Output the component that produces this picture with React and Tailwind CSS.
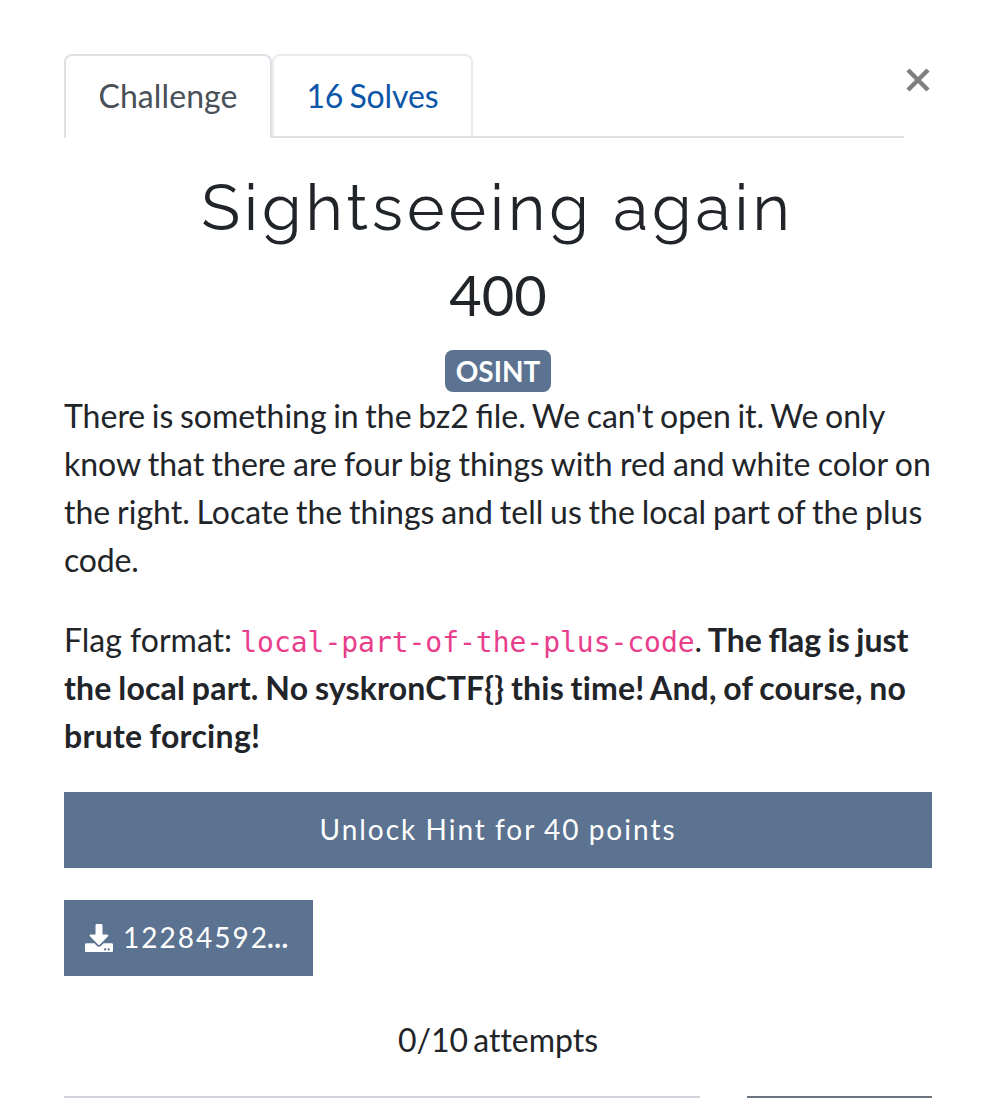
import React from "react";
import { FaDownload } from "react-icons/fa";

export default function App() {
  return (
    <main className="h-[1098px] w-[990px] overflow-hidden bg-white pl-16 pr-[58px] pt-[54px] font-['Lato',sans-serif] text-[32px] leading-[48px] text-[#212529]">
      <div className="flex h-[84px] items-start">
        <nav className="flex h-[84px] w-[840px] border-b-2 border-[#dee2e6]">
          <button className="h-[84px] w-[208px] shrink-0 rounded-t-lg border-2 border-b-0 border-[#dee2e6] bg-white pb-[2px] tracking-[0.1px] text-[#495057]">Challenge</button>
          <button className="h-[82px] w-[201px] shrink-0 rounded-t-lg border-2 border-b-0 border-[#e9ecef] text-[#0b56a9] [word-spacing:-2px] tracking-[-0.1px]">16 Solves</button>
        </nav>
        <button aria-label="Close" className="mt-[14px] h-6 w-7">
          <svg viewBox="0 0 28 24" className="h-6 w-7 stroke-[#7f7f7f]" strokeWidth="4.5"><path d="M4 2 24 22M24 2 4 22" /></svg>
        </button>
      </div>
      <h1 className="mt-[31px] pr-px text-center font-['Raleway','Lato',sans-serif] text-[64px] leading-[77px] tracking-[4px]">Sightseeing again</h1>
      <h2 className="mt-[15px] text-center text-[56px] leading-[67px]">400</h2>
      <div className="flex justify-center">
        <span className="mt-[22px] h-[42px] w-[106px] rounded-lg bg-[#5b7290] text-center text-[28px] font-bold leading-[42px] text-white">OSINT</span>
      </div>
      <p className="whitespace-nowrap">
        <span className="block [word-spacing:-1.6px]">There is something in the bz2 file. We can't open it. We only</span>
        <span className="block [word-spacing:-0.9px]">know that there are four big things with red and white color on</span>
        <span className="block [word-spacing:-1.35px]">the right. Locate the things and tell us the local part of the plus</span>
        <span className="block tracking-[-0.2px]">code.</span>
      </p>
      <p className="mt-8 whitespace-nowrap">
        <span className="block h-12">Flag format: <code className="font-['DejaVu_Sans_Mono',monospace] text-[28px] leading-none tracking-[-0.03px] text-[#e83e8c]">local-part-of-the-plus-code</code><span className="[word-spacing:-2.5px]">. </span><b className="[word-spacing:-1.3px]">The flag is just</b></span>
        <b className="block tracking-[0.19px] [font-variant-ligatures:no-common-ligatures] [word-spacing:-1.3px]">the local part. No syskronCTF{"{}"} this time! And, of course, no</b>
        <b className="block tracking-[0.3px] [word-spacing:-1px]">brute forcing!</b>
      </p>
      <button className="mt-8 block h-[76px] w-full bg-[#5b7290] pb-[2px] text-[28px] tracking-[2px] text-white [word-spacing:-1px]">Unlock Hint for 40 points</button>
      <button className="mt-8 flex h-[76px] w-[249px] items-center bg-[#5b7290] pl-[21px] text-[28px] tracking-[2px] text-white"><FaDownload className="mr-[10px] h-7 w-7" /><span className="pb-[2px]">12284592<span className="-ml-[2px] font-bold tracking-[0.6px]">...</span></span></button>
      <p className="mt-10 text-center [font-variant-ligatures:no-common-ligatures] [word-spacing:-3px]">0/10 attempts</p>
      <div className="mt-8 flex justify-between"><div className="h-2 w-[636px] bg-[#ced4da]" /><div className="h-2 w-[185px] bg-[#6c757d]" /></div>
    </main>
  );
}
